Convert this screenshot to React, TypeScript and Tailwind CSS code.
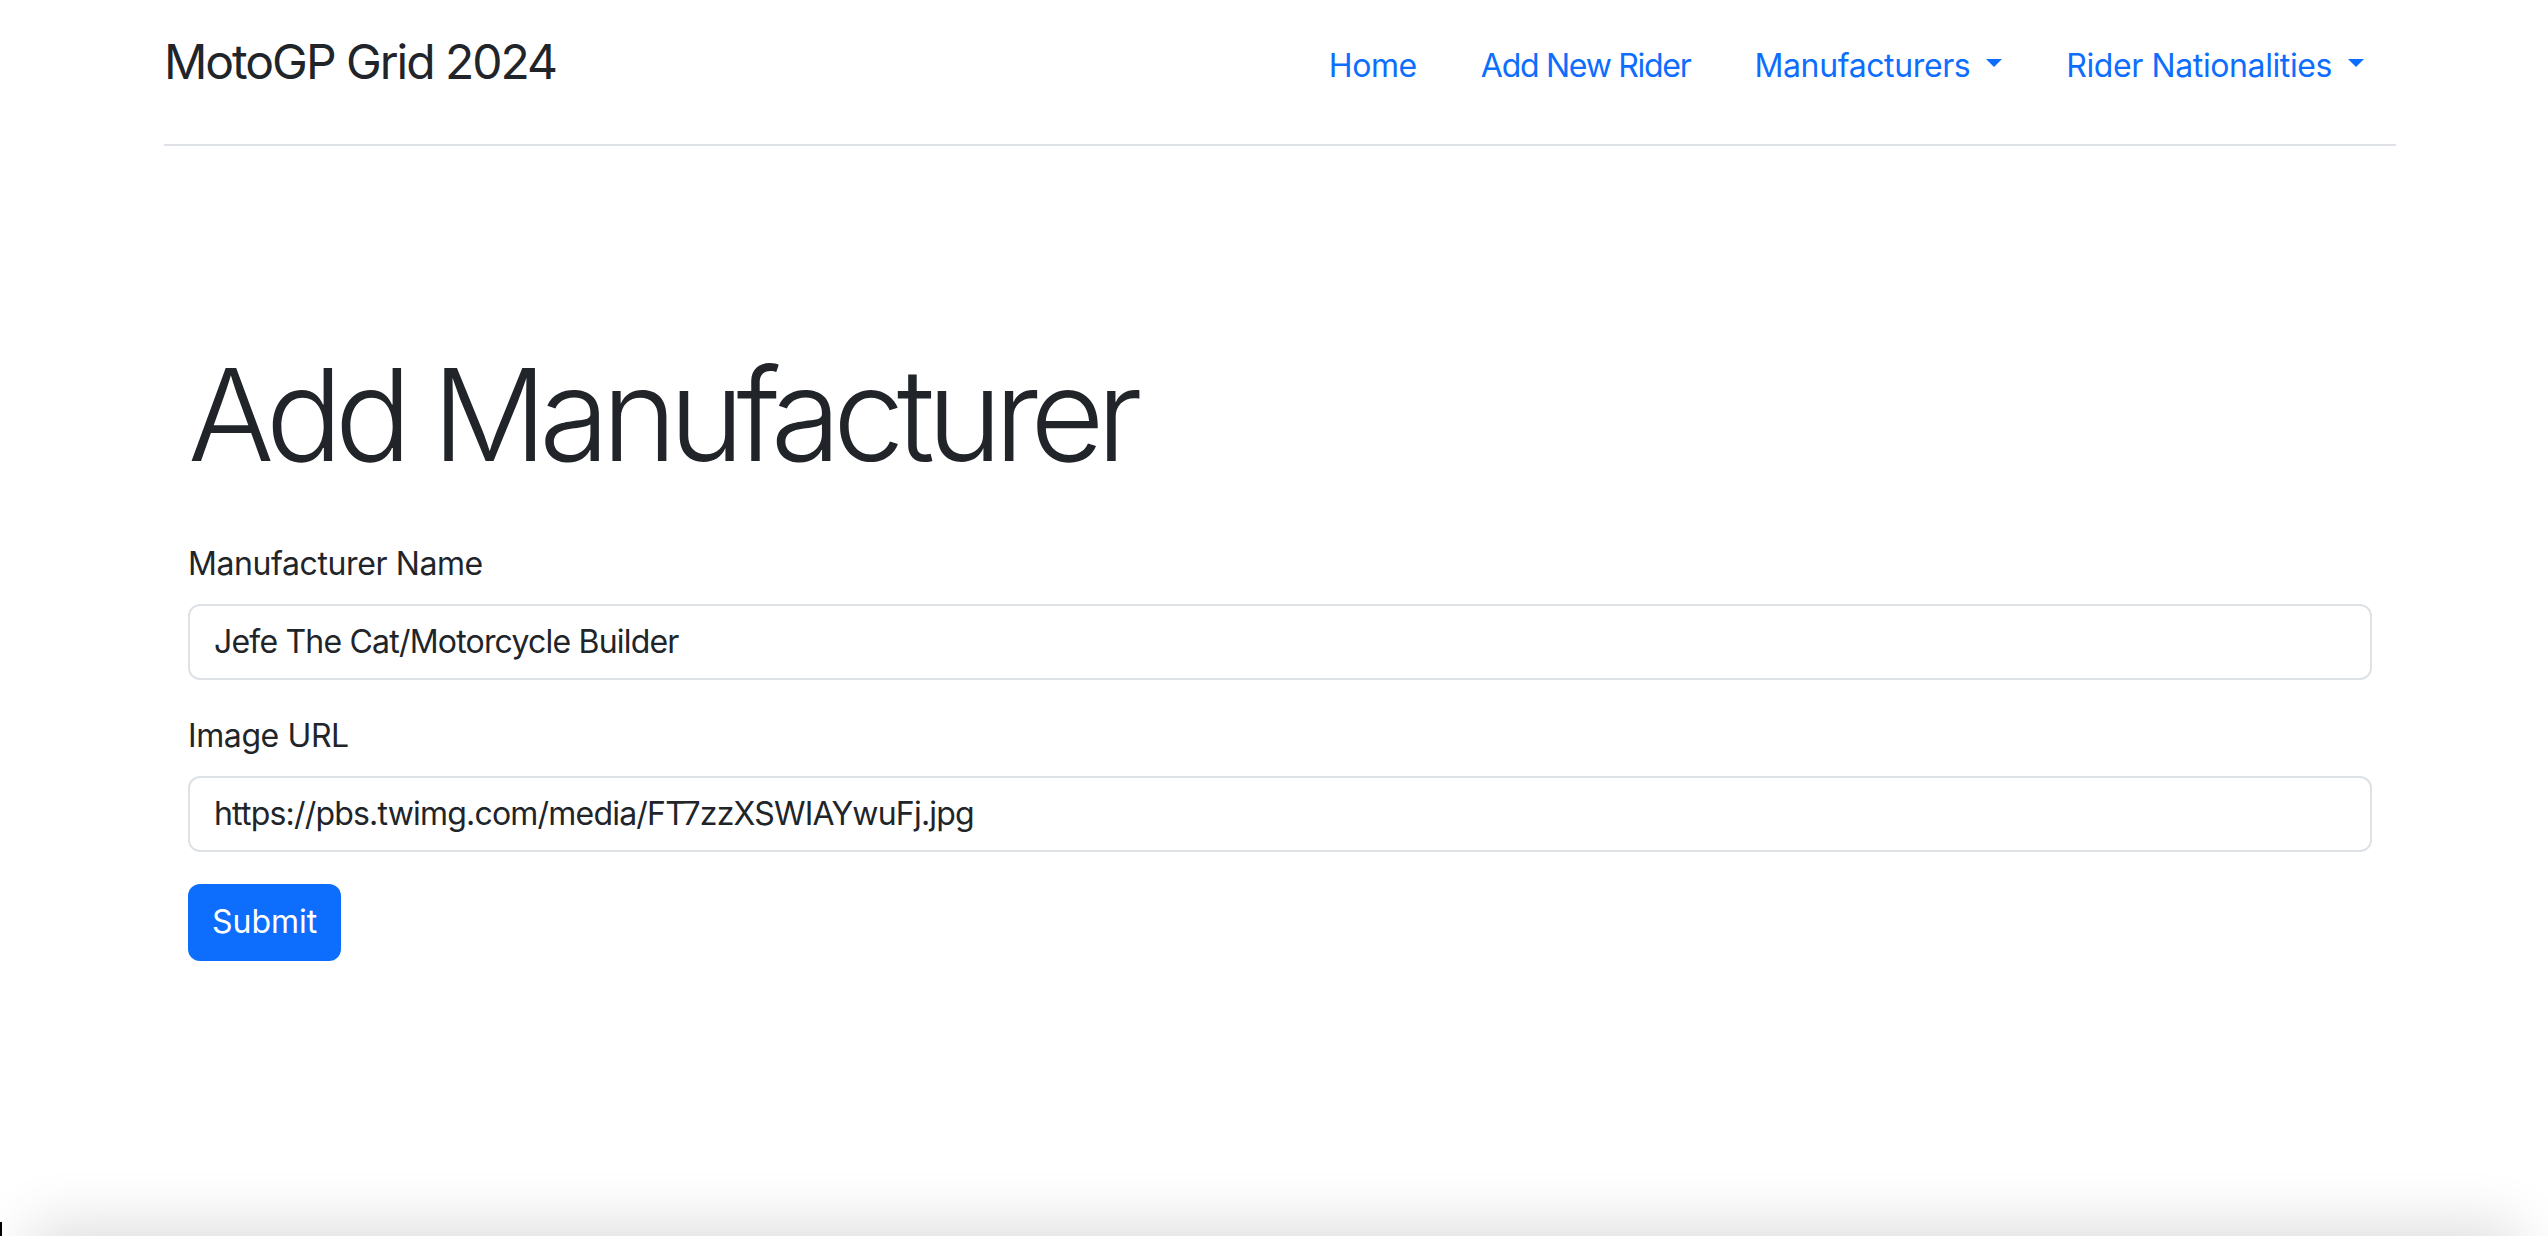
import React from "react";

const Caret = () => (
  <span className="ml-[16px] inline-block h-0 w-0 border-x-[8.5px] border-t-[8px] border-x-transparent border-t-[#0d6efd] align-[10px]" />
);

export default function App() {
  return (
    <div className="relative h-[1236px] overflow-hidden bg-white font-['Inter','Noto_Sans',sans-serif] text-[#212529]">
      <div className="ml-[164px] w-[2232px]">
        <header className="flex items-start justify-between border-b-2 border-[#dee2e6] pb-[38px] pt-[26px]">
          <a className="text-[48px] leading-[72px] tracking-[-0.042em] text-[#212529]">MotoGP Grid 2024</a>
          <nav className="flex items-start tracking-[-0.025em]">
            <a className="px-[32px] py-[16px] text-[32px] leading-[48px] text-[#0d6efd]">Home</a>
            <a className="px-[32px] py-[16px] text-[32px] leading-[48px] tracking-[-0.04em] text-[#0d6efd]">Add New Rider</a>
            <a className="px-[32px] py-[16px] text-[32px] leading-[48px] tracking-[-0.012em] text-[#0d6efd]">
              Manufacturers
              <Caret />
            </a>
            <a className="px-[32px] py-[16px] text-[32px] leading-[48px] text-[#0d6efd]">
              Rider Nationalities
              <Caret />
            </a>
          </nav>
        </header>
        <main className="px-[24px] pt-[192px]">
          <h1 className="mb-[48px] text-[128px] font-light leading-[1.2] tracking-[-0.062em]">Add Manufacturer</h1>
          <form onSubmit={(e) => e.preventDefault()} className="tracking-[-0.025em]">
            <div className="mb-[32px]">
              <label className="mb-[16px] block text-[32px] leading-[48px]">Manufacturer Name</label>
              <input
                className="block h-[76px] w-full rounded-[12px] border-2 border-[#dee2e6] px-[24px] text-[32px] leading-[48px] tracking-[-0.025em] text-[#212529] outline-none"
                defaultValue="Jefe The Cat/Motorcycle Builder"
              />
            </div>
            <div className="mb-[32px]">
              <label className="mb-[16px] block text-[32px] leading-[48px]">Image URL</label>
              <input
                className="block h-[76px] w-full rounded-[12px] border-2 border-[#dee2e6] px-[24px] text-[32px] leading-[48px] tracking-[-0.025em] text-[#212529] outline-none"
                defaultValue="https://pbs.twimg.com/media/FT7zzXSWIAYwuFj.jpg"
              />
            </div>
            <button className="h-[77px] rounded-[12px] bg-[#0d6efd] px-[24px] text-[32px] leading-[48px] tracking-normal text-white">
              Submit
            </button>
          </form>
        </main>
      </div>
      <div className="pointer-events-none absolute left-[40px] right-[40px] top-[1236px] h-[100px] shadow-[0_0_60px_10px_rgba(0,0,0,0.14)]" />
      <div className="absolute bottom-0 left-0 h-[14px] w-[2px] bg-black" />
    </div>
  );
}
